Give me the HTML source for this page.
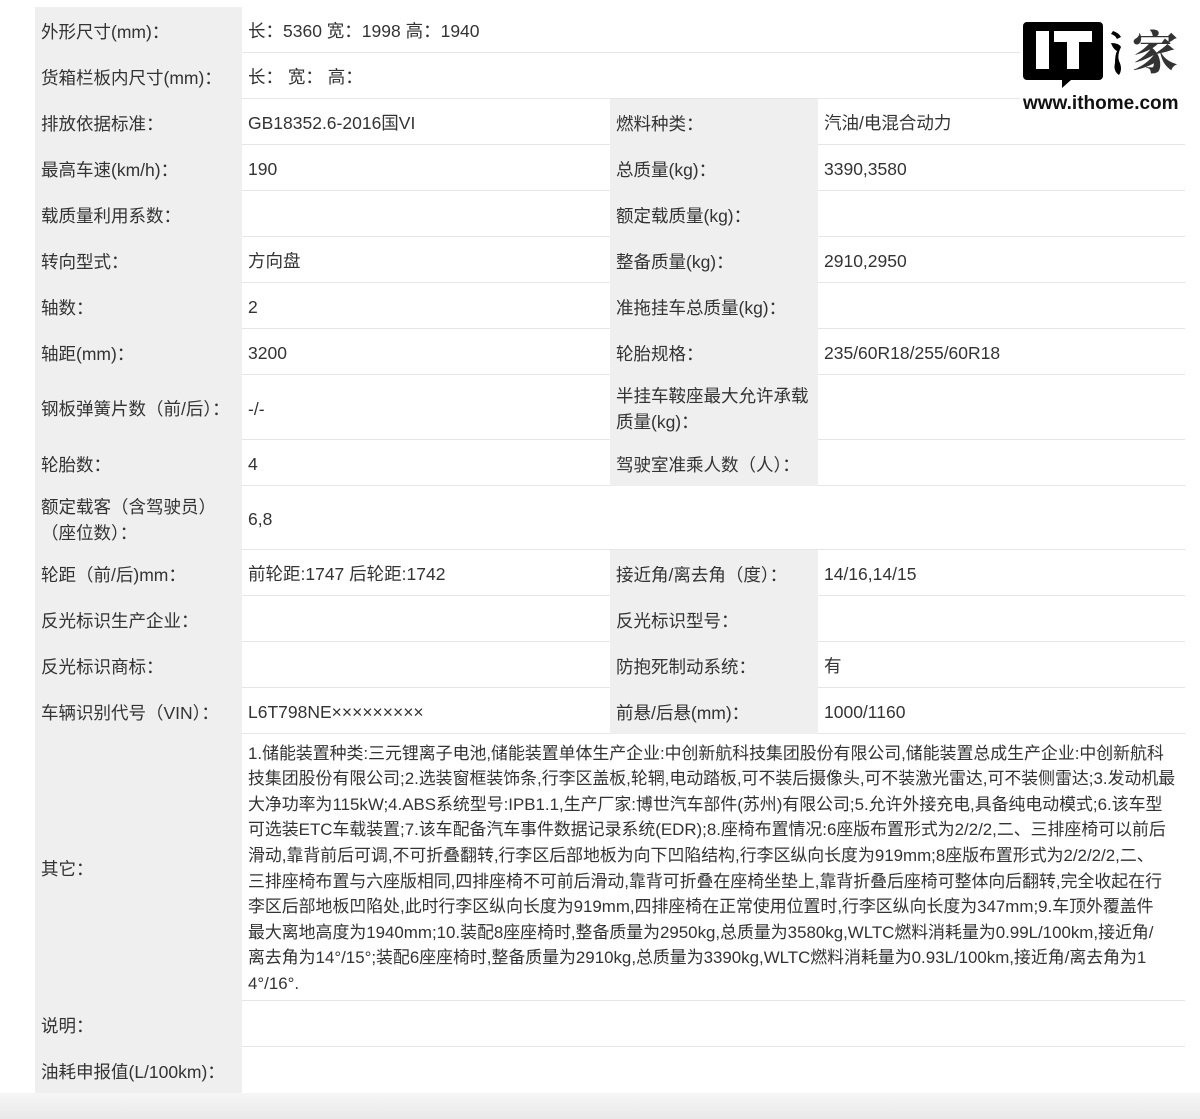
<!DOCTYPE html>
<html><head><meta charset="utf-8"><style>
body{margin:0;width:1200px;height:1119px;background:#fff;position:relative;overflow:hidden;font-family:"Liberation Sans","Noto Sans CJK SC",sans-serif;color:#333;font-size:17.5px}
.c{position:absolute;box-sizing:border-box;display:flex;align-items:center;padding-left:6px;padding-top:3px;line-height:26px}
.g{background:#efefef}
.w{background:#fff;border-bottom:1px solid #e6e6e6}
.bot{position:absolute;left:0;top:1093px;width:1200px;height:26px;background:linear-gradient(#f6f6f6,#e9e9e9)}
.p{white-space:nowrap;line-height:25.6px}
</style></head><body>
<div class="c g" style="left:35px;top:7px;width:207px;height:1086px"></div>
<div class="c g" style="left:610px;top:99px;width:208px;height:387px"></div>
<div class="c g" style="left:610px;top:550px;width:208px;height:184px"></div>

<div class="c" style="left:35px;top:7px;height:46px">外形尺寸(mm)：</div>
<div class="c w" style="left:242px;top:7px;width:943px;height:46px">长：5360 宽：1998 高：1940</div>
<div class="c" style="left:35px;top:53px;height:46px">货箱栏板内尺寸(mm)：</div>
<div class="c w" style="left:242px;top:53px;width:943px;height:46px">长： 宽： 高：</div>

<div class="c" style="left:35px;top:99px;height:46px">排放依据标准：</div>
<div class="c w" style="left:242px;top:99px;width:368px;height:46px">GB18352.6-2016国VI</div>
<div class="c" style="left:610px;top:99px;height:46px">燃料种类：</div>
<div class="c w" style="left:818px;top:99px;width:367px;height:46px">汽油/电混合动力</div>

<div class="c" style="left:35px;top:145px;height:46px">最高车速(km/h)：</div>
<div class="c w" style="left:242px;top:145px;width:368px;height:46px">190</div>
<div class="c" style="left:610px;top:145px;height:46px">总质量(kg)：</div>
<div class="c w" style="left:818px;top:145px;width:367px;height:46px">3390,3580</div>

<div class="c" style="left:35px;top:191px;height:46px">载质量利用系数：</div>
<div class="c w" style="left:242px;top:191px;width:368px;height:46px"></div>
<div class="c" style="left:610px;top:191px;height:46px">额定载质量(kg)：</div>
<div class="c w" style="left:818px;top:191px;width:367px;height:46px"></div>

<div class="c" style="left:35px;top:237px;height:46px">转向型式：</div>
<div class="c w" style="left:242px;top:237px;width:368px;height:46px">方向盘</div>
<div class="c" style="left:610px;top:237px;height:46px">整备质量(kg)：</div>
<div class="c w" style="left:818px;top:237px;width:367px;height:46px">2910,2950</div>

<div class="c" style="left:35px;top:283px;height:46px">轴数：</div>
<div class="c w" style="left:242px;top:283px;width:368px;height:46px">2</div>
<div class="c" style="left:610px;top:283px;height:46px">准拖挂车总质量(kg)：</div>
<div class="c w" style="left:818px;top:283px;width:367px;height:46px"></div>

<div class="c" style="left:35px;top:329px;height:46px">轴距(mm)：</div>
<div class="c w" style="left:242px;top:329px;width:368px;height:46px">3200</div>
<div class="c" style="left:610px;top:329px;height:46px">轮胎规格：</div>
<div class="c w" style="left:818px;top:329px;width:367px;height:46px">235/60R18/255/60R18</div>

<div class="c" style="left:35px;top:375px;height:65px">钢板弹簧片数（前/后）：</div>
<div class="c w" style="left:242px;top:375px;width:368px;height:65px">-/-</div>
<div class="c" style="left:610px;top:375px;height:65px;width:204px">半挂车鞍座最大允许承载质量(kg)：</div>
<div class="c w" style="left:818px;top:375px;width:367px;height:65px"></div>

<div class="c" style="left:35px;top:440px;height:46px">轮胎数：</div>
<div class="c w" style="left:242px;top:440px;width:368px;height:46px">4</div>
<div class="c" style="left:610px;top:440px;height:46px">驾驶室准乘人数（人）：</div>
<div class="c w" style="left:818px;top:440px;width:367px;height:46px"></div>

<div class="c" style="left:35px;top:486px;height:64px;width:200px">额定载客（含驾驶员）（座位数）：</div>
<div class="c w" style="left:242px;top:486px;width:943px;height:64px">6,8</div>

<div class="c" style="left:35px;top:550px;height:46px">轮距（前/后)mm：</div>
<div class="c w" style="left:242px;top:550px;width:368px;height:46px">前轮距:1747 后轮距:1742</div>
<div class="c" style="left:610px;top:550px;height:46px">接近角/离去角（度）：</div>
<div class="c w" style="left:818px;top:550px;width:367px;height:46px">14/16,14/15</div>

<div class="c" style="left:35px;top:596px;height:46px">反光标识生产企业：</div>
<div class="c w" style="left:242px;top:596px;width:368px;height:46px"></div>
<div class="c" style="left:610px;top:596px;height:46px">反光标识型号：</div>
<div class="c w" style="left:818px;top:596px;width:367px;height:46px"></div>

<div class="c" style="left:35px;top:642px;height:46px">反光标识商标：</div>
<div class="c w" style="left:242px;top:642px;width:368px;height:46px"></div>
<div class="c" style="left:610px;top:642px;height:46px">防抱死制动系统：</div>
<div class="c w" style="left:818px;top:642px;width:367px;height:46px">有</div>

<div class="c" style="left:35px;top:688px;height:46px">车辆识别代号（VIN）：</div>
<div class="c w" style="left:242px;top:688px;width:368px;height:46px">L6T798NE×××××××××</div>
<div class="c" style="left:610px;top:688px;height:46px">前悬/后悬(mm)：</div>
<div class="c w" style="left:818px;top:688px;width:367px;height:46px">1000/1160</div>

<div class="c" style="left:35px;top:734px;height:267px">其它：</div>
<div class="c w p" style="left:242px;top:734px;width:943px;height:267px;font-size:16.9px">1.储能装置种类:三元锂离子电池,储能装置单体生产企业:中创新航科技集团股份有限公司,储能装置总成生产企业:中创新航科<br>技集团股份有限公司;2.选装窗框装饰条,行李区盖板,轮辋,电动踏板,可不装后摄像头,可不装激光雷达,可不装侧雷达;3.发动机最<br>大净功率为115kW;4.ABS系统型号:IPB1.1,生产厂家:博世汽车部件(苏州)有限公司;5.允许外接充电,具备纯电动模式;6.该车型<br>可选装ETC车载装置;7.该车配备汽车事件数据记录系统(EDR);8.座椅布置情况:6座版布置形式为2/2/2,二、三排座椅可以前后<br>滑动,靠背前后可调,不可折叠翻转,行李区后部地板为向下凹陷结构,行李区纵向长度为919mm;8座版布置形式为2/2/2/2,二、<br>三排座椅布置与六座版相同,四排座椅不可前后滑动,靠背可折叠在座椅坐垫上,靠背折叠后座椅可整体向后翻转,完全收起在行<br>李区后部地板凹陷处,此时行李区纵向长度为919mm,四排座椅在正常使用位置时,行李区纵向长度为347mm;9.车顶外覆盖件<br>最大离地高度为1940mm;10.装配8座座椅时,整备质量为2950kg,总质量为3580kg,WLTC燃料消耗量为0.99L/100km,接近角/<br>离去角为14°/15°;装配6座座椅时,整备质量为2910kg,总质量为3390kg,WLTC燃料消耗量为0.93L/100km,接近角/离去角为1<br>4°/16°.</div>

<div class="c" style="left:35px;top:1001px;height:46px">说明：</div>
<div class="c w" style="left:242px;top:1001px;width:943px;height:46px"></div>
<div class="c" style="left:35px;top:1047px;height:46px">油耗申报值(L/100km)：</div>
<div class="c" style="left:242px;top:1047px;width:943px;height:46px;background:#fff"></div>
<div class="bot"></div>

<div style="position:absolute;left:1020px;top:6px;width:172px;height:108px;background:#fff"></div>
<svg style="position:absolute;left:1023px;top:21px" width="110" height="68" viewBox="0 0 110 68">
<path d="M4 1h72a4 4 0 0 1 4 4v50a4 4 0 0 1-4 4H48l-9 8v-8H4a4 4 0 0 1-4-4V5a4 4 0 0 1 4-4z" fill="#000"/>
<rect x="13" y="10" width="13" height="38" fill="#fff"/>
<rect x="31" y="10" width="38" height="11" fill="#fff"/>
<rect x="44" y="10" width="12" height="38" fill="#fff"/>
<path d="M90 10q6 2 8 6l-4 2q-2-4-6-5zM88 22q8 0 10 4-4 8-2 14 4 8 0 14-6-4-4-12 0-8 2-12-4-2-6-8z" fill="#000"/>
</svg>
<div style="position:absolute;left:1132px;top:24px;font-size:46px;font-family:'Noto Serif CJK SC',serif;font-weight:900;line-height:52px">家</div>
<div style="position:absolute;left:1023px;top:93px;font-size:19px;font-weight:bold;color:#111">www.ithome.com</div>
</body></html>
